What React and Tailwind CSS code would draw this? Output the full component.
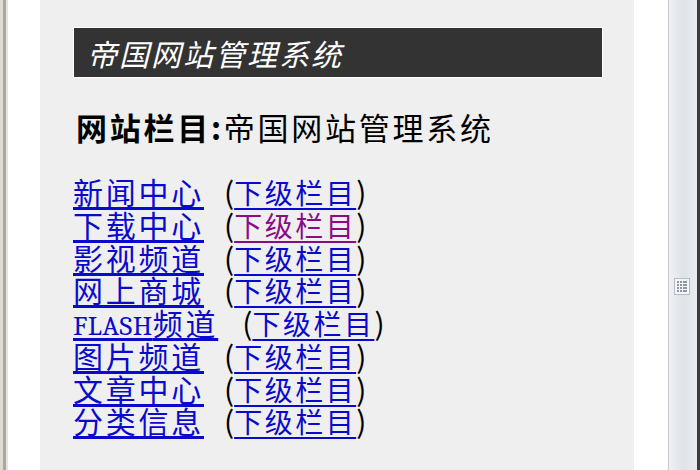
const CATS = [
  { name: '新闻中心' },
  { name: '下载中心', visited: true },
  { name: '影视频道' },
  { name: '网上商城' },
  { name: 'FLASH频道', flash: true },
  { name: '图片频道' },
  { name: '文章中心' },
  { name: '分类信息' },
];

const FONT = { fontFamily: '"Noto Sans CJK SC", "Noto Sans", sans-serif' };

function CatRow({ cat }) {
  return (
    <div className="h-[32.75px] leading-[32.75px] whitespace-nowrap text-[30px] text-black">
      <a href="#" className="text-[#0a0acc] underline underline-offset-[3px] tracking-[2.75px]">
        {cat.flash ? (
          <>
            <span className="font-serif text-[28px] tracking-[0.5px]">FLASH</span>
            频道
          </>
        ) : (
          cat.name
        )}
      </a>
      <span className={cat.flash ? 'ml-[24px]' : 'ml-[20px]'}>(</span>
      <a
        href="#"
        className={`text-[28px] tracking-[2.5px] underline underline-offset-[4px] ${cat.visited ? 'text-[#8a0a8a]' : 'text-[#0a0acc]'}`}
      >
        下级栏目
      </a>
      <span>)</span>
    </div>
  );
}

function Scrollbar() {
  return (
    <div className="relative w-[29px] h-full border-l border-[#c4c6ca] bg-gradient-to-r from-[#eef0f3] via-[#dfe3e9] to-[#e8ebef]">
      <div className="absolute left-[5px] top-[278px] w-[16px] h-[17px] border border-[#b8bcc2] bg-[#f4f5f7] grid grid-cols-4 gap-[1px] p-[2px]">
        {Array.from({ length: 16 }).map((_, i) => (
          <span key={i} className="w-[2px] h-[2px] bg-[#8c96a4]" />
        ))}
      </div>
    </div>
  );
}

export default function App() {
  return (
    <div className="w-[700px] h-[470px] flex overflow-hidden bg-white" style={FONT}>
      <div className="flex h-full">
        <div className="w-[3px] bg-[#dedad4]" />
        <div className="w-[3px] bg-[#aaa7a2]" />
        <div className="w-[2px] bg-[#e6e4e0]" />
      </div>
      <div className="w-[32px] h-full bg-white" />

      <div className="w-[594px] h-full bg-[#efefef] pl-[33px] pt-[27px]">
        <div className="w-[530px] h-[51px] border border-white bg-[#333333] flex items-center pl-[13px]">
          <span className="text-white italic text-[30px] tracking-[2px] leading-none">帝国网站管理系统</span>
        </div>

        <div className="mt-[29px] pl-[3px] h-[40px] leading-[40px] text-[31px] tracking-[2.75px] text-black whitespace-nowrap">
          <span className="font-bold">网站栏目</span>
          <span className="font-bold">:</span>
          <span>帝国网站管理系统</span>
        </div>

        <div className="mt-[28px]">
          {CATS.map((c) => (
            <CatRow key={c.name} cat={c} />
          ))}
        </div>
      </div>

      <div className="w-[34px] h-full bg-white" />
      <Scrollbar />
      <div className="w-[3px] h-full bg-[#3c3c3c]" />
    </div>
  );
}
